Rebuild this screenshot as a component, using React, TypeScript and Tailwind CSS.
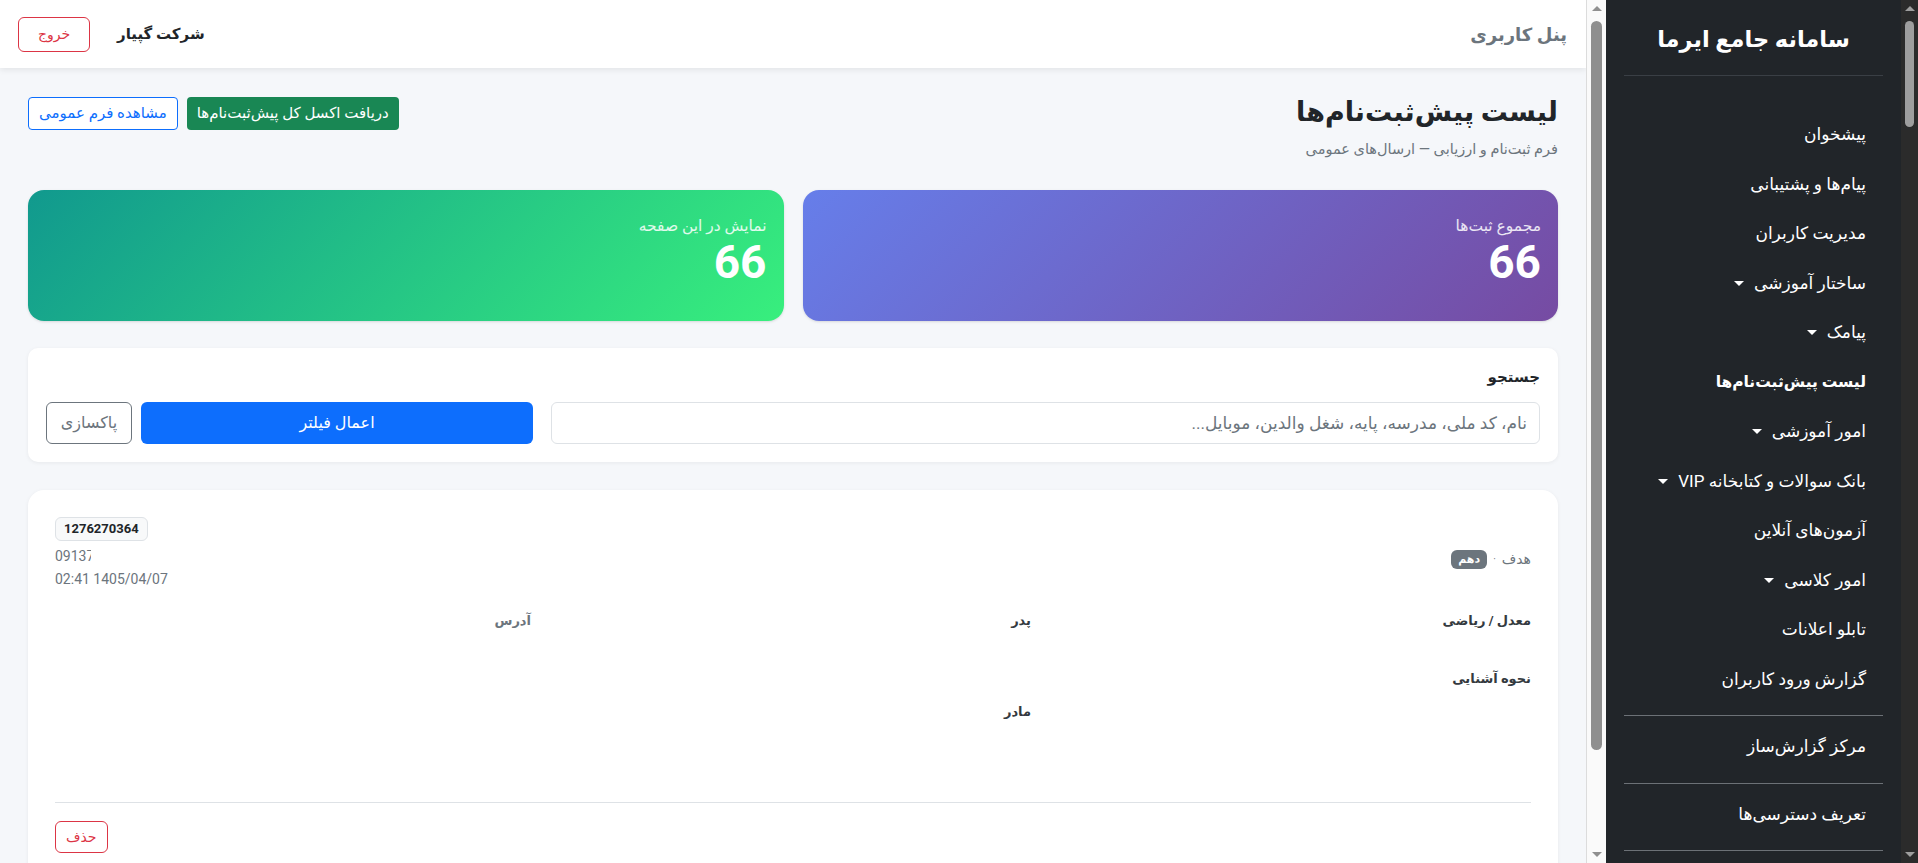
import React from "react";

type NavItem = {
  label: string;
  caret?: boolean;
  active?: boolean;
};

const navItems: NavItem[] = [
  { label: "پیشخوان" },
  { label: "پیام‌ها و پشتیبانی" },
  { label: "مدیریت کاربران" },
  { label: "ساختار آموزشی", caret: true },
  { label: "پیامک", caret: true },
  { label: "لیست پیش‌ثبت‌نام‌ها", active: true },
  { label: "امور آموزشی", caret: true },
  { label: "بانک سوالات و کتابخانه VIP", caret: true },
  { label: "آزمون‌های آنلاین" },
  { label: "امور کلاسی", caret: true },
  { label: "تابلو اعلانات" },
  { label: "گزارش ورود کاربران" },
];

// items that sit between separators at the bottom of the menu
const toolItems = ["مرکز گزارش‌ساز", "تعریف دسترسی‌ها"];

const Caret = () => (
  <span className="inline-block h-0 w-0 border-x-[5px] border-t-[5px] border-x-transparent border-t-white" />
);

const NavLink = ({ label, caret, active }: NavItem) => (
  <a
    href="#"
    className={`flex items-center gap-[10px] py-3 pr-[35px] pl-4 leading-[25.5px] text-white ${
      active ? "text-[15.5px] font-bold" : "text-[17px] font-normal"
    }`}
  >
    <span>{label}</span>
    {caret && <Caret />}
  </a>
);

function ScrollRail({ dark, thumb }: { dark?: boolean; thumb: string }) {
  const arrow = dark ? "border-[#9e9e9e]" : "border-[#8f8f8f]";
  return (
    <div
      aria-hidden
      className={`flex h-screen shrink-0 flex-col ${
        dark ? "w-[17px] bg-[#2b2b2b]" : "w-[20px] border-l border-[#dcdcdc] bg-[#fafafa]"
      }`}
    >
      <div className="flex h-[17px] items-center justify-center">
        <span className={`h-0 w-0 border-x-[5px] border-b-[5px] border-x-transparent ${arrow}`} />
      </div>
      <div className="flex-1 px-[4px] pt-[4px]">
        <div className={`w-full rounded-full ${dark ? "bg-[#9e9e9e]" : "bg-[#8f8f8f]"} ${thumb}`} />
      </div>
      <div className="flex h-[17px] items-center justify-center">
        <span className={`h-0 w-0 border-x-[5px] border-t-[5px] border-x-transparent ${arrow}`} />
      </div>
    </div>
  );
}

function Sidebar() {
  return (
    <aside dir="rtl" className="h-screen w-[295px] shrink-0 overflow-hidden bg-[#212529]">
      <div className="pt-[22px] pb-[19px] text-center text-[22.5px] leading-[34px] font-bold text-white">
        سامانه جامع ایرما
      </div>
      <div className="mx-[18px] h-px bg-[#3a3f45]" />
      <nav className="mt-[34px]">
        {navItems.map((item) => (
          <NavLink key={item.label} {...item} />
        ))}
        {toolItems.map((label) => (
          <div key={label}>
            <div className="mx-[18px] mt-[11px] mb-[6px] h-px bg-[#6c7176]" />
            <NavLink label={label} />
          </div>
        ))}
        <div className="mx-[18px] mt-[11px] h-px bg-[#6c7176]" />
      </nav>
    </aside>
  );
}

function StatCard({ label, value, gradient }: { label: string; value: number; gradient: string }) {
  return (
    <div className={`h-[131px] rounded-[16px] pt-[26px] pr-[17px] pl-6 text-white shadow-sm ${gradient}`}>
      <div className="text-[15.5px] leading-[21px] text-white/85">{label}</div>
      <div className="text-[46px] leading-[50px] font-bold">{value}</div>
    </div>
  );
}

function Field({ label, muted, space }: { label: string; muted?: boolean; space: string }) {
  return (
    <div>
      <div className={`text-[13px] leading-[21px] font-bold ${muted ? "text-[#6c757d]" : "text-[#343a40]"}`}>
        {label}
      </div>
      <div className={space} />
    </div>
  );
}

function RecordCard() {
  return (
    <div className="rounded-[16px] bg-white px-[27px] pt-[27px] pb-[27px] shadow-[0_1px_4px_rgba(0,0,0,0.06)]">
      <div className="flex items-start justify-between">
        <div className="mt-[32px] flex items-center gap-[6px] text-[14px] text-[#6c757d]">
          <span>هدف</span>
          <span className="text-[10px]">·</span>
          <span className="rounded-[6px] bg-[#6c757d] px-[7px] text-[11px] leading-[19px] font-bold text-white">
            دهم
          </span>
        </div>
        <div dir="ltr" className="flex flex-col items-start">
          <span className="rounded-[6px] border border-[#dee2e6] bg-[#f8f9fa] px-2 text-[13px] leading-[22px] font-bold text-[#212529]">
            1276270364
          </span>
          <span className="mt-[5px] inline-block w-[36px] overflow-hidden text-[14px] leading-[20px] whitespace-nowrap text-[#6c757d]">
            09137
          </span>
          <span className="mt-[3px] text-[14px] leading-[20px] text-[#6c757d]">02:41 1405/04/07</span>
        </div>
      </div>

      <div className="mt-[21px] grid grid-cols-3 gap-x-6">
        <div>
          <Field label="معدل / ریاضی" space="h-[37px]" />
          <Field label="نحوه آشنایی" space="h-[40px]" />
        </div>
        <div>
          <Field label="پدر" space="h-[70px]" />
          <Field label="مادر" space="h-[64px]" />
        </div>
        <div>
          <Field label="آدرس" muted space="h-[40px]" />
        </div>
      </div>

      <div className="mt-[16px] h-px bg-[#dee2e6]" />
      <div className="mt-[18px] flex justify-end">
        <button className="h-[32px] rounded-[6px] border border-[#dc3545] px-[10px] text-[14px] text-[#dc3545]">
          حذف
        </button>
      </div>
    </div>
  );
}

export default function App() {
  return (
    <div className="flex h-screen overflow-hidden bg-[#f5f7fa] font-['Roboto','DejaVu_Sans',sans-serif] text-[#212529]">
      <main dir="rtl" className="h-screen min-w-0 flex-1 overflow-hidden">
        <header className="flex h-[68px] items-center justify-between bg-white pr-[19px] pl-[18px] shadow-[0_2px_6px_rgba(0,0,0,0.08)]">
          <div className="text-[18px] font-bold text-[#6c757d]">پنل کاربری</div>
          <div className="flex items-center gap-[27px]">
            <span className="text-[15px] font-bold text-[#212529]">شرکت گپیار</span>
            <button className="h-[35px] w-[72px] rounded-[6px] border border-[#dc3545] text-[14px] text-[#dc3545]">
              خروج
            </button>
          </div>
        </header>

        <div className="px-7 pt-[27px] pb-[91px]">
          <div className="flex items-start justify-between">
            <div>
              <h1 className="text-[27px] leading-[34px] font-bold text-[#212529]">لیست پیش‌ثبت‌نام‌ها</h1>
              <p className="mt-[10px] text-[14.5px] leading-[21px] text-[#6c757d]">
                فرم ثبت‌نام و ارزیابی — ارسال‌های عمومی
              </p>
            </div>
            <div className="mt-[2px] flex gap-[9px]">
              <button className="h-[33px] rounded-[4px] bg-[#198754] px-[10px] text-[15px] text-white">
                دریافت اکسل کل پیش‌ثبت‌نام‌ها
              </button>
              <button className="h-[33px] rounded-[4px] border border-[#0d6efd] bg-white px-[10px] text-[15px] text-[#0d6efd]">
                مشاهده فرم عمومی
              </button>
            </div>
          </div>

          <div className="mt-[30px] grid grid-cols-2 gap-[19px]">
            <StatCard
              label="مجموع ثبت‌ها"
              value={66}
              gradient="bg-[linear-gradient(135deg,#667eea_0%,#764ba2_100%)]"
            />
            <StatCard
              label="نمایش در این صفحه"
              value={66}
              gradient="bg-[linear-gradient(135deg,#11998e_0%,#38ef7d_100%)]"
            />
          </div>

          <div className="mt-[27px] rounded-[10px] bg-white p-[18px] shadow-[0_1px_4px_rgba(0,0,0,0.06)]">
            <label className="block text-[15px] leading-[22px] font-bold text-[#212529]">جستجو</label>
            <div className="mt-[14px] flex gap-[9px]">
              <input
                type="text"
                placeholder="نام، کد ملی، مدرسه، پایه، شغل والدین، موبایل..."
                className="me-[9px] h-[42px] flex-1 rounded-[6px] border border-[#dee2e6] px-3 text-[17px] outline-none placeholder:text-[#6c757d]"
              />
              <button className="h-[42px] w-[392px] rounded-[6px] bg-[#0d6efd] text-[16px] font-medium text-white">
                اعمال فیلتر
              </button>
              <button className="h-[42px] w-[86px] rounded-[6px] border border-[#6c757d] text-[16px] text-[#6c757d]">
                پاکسازی
              </button>
            </div>
          </div>

          <div className="mt-[28px]">
            <RecordCard />
          </div>
        </div>
      </main>
      <ScrollRail thumb="h-[729px]" />
      <Sidebar />
      <ScrollRail dark thumb="h-[106px]" />
    </div>
  );
}
